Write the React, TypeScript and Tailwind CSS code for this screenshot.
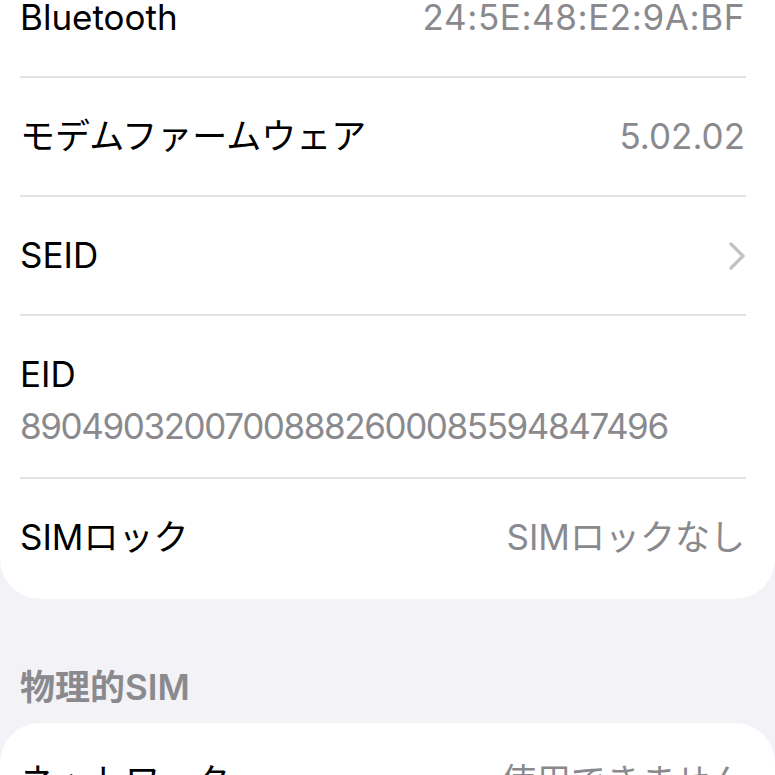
import React from "react";

const font = { fontFamily: '"Inter", "Noto Sans CJK JP", sans-serif' };

const Row = ({ label, value, chevron, wide }: { label: string; value?: string; chevron?: boolean; wide?: boolean }) => (
  <div className="flex h-[117px] items-center justify-between pr-[30px]">
    <span className="text-[35px] text-black">{label}</span>
    {value && (
      <span className={wide ? "text-[35px] tracking-[0.6px] text-[#8a8a8e]" : "text-[35px] text-[#8a8a8e]"}>{value}</span>
    )}
    {chevron && (
      <svg width="18" height="30" viewBox="0 0 18 30" className="mr-[-1px]">
        <path d="M3 3 L15 15 L3 27" fill="none" stroke="#c4c4c7" strokeWidth="3.5" strokeLinecap="round" strokeLinejoin="round" />
      </svg>
    )}
  </div>
);

const Sep = () => <div className="mr-[29px] h-[2px] bg-[#e3e3e6]" />;

export default function App() {
  return (
    <div className="h-[775px] overflow-hidden bg-[#f2f2f7]" style={font}>
      <div className="mt-[-41px] rounded-b-[40px] bg-white pl-[20px]">
        <Row label="Bluetooth" value="24:5E:48:E2:9A:BF" wide />
        <Sep />
        <Row label="モデムファームウェア" value="5.02.02" />
        <Sep />
        <Row label="SEID" chevron />
        <Sep />
        <div className="flex h-[161px] flex-col justify-center gap-[8px] pt-[6px]">
          <span className="text-[35px] leading-[44px] text-black">EID</span>
          <span className="text-[35px] leading-[44px] tracking-[-0.04em] text-[#8a8a8e]">89049032007008882600085594847496</span>
        </div>
        <Sep />
        <div className="pb-[3px]">
          <Row label="SIMロック" value="SIMロックなし" />
        </div>
      </div>
      <div className="px-[20px] pb-[16px] pt-[68px]">
        <div className="text-[35px] leading-[40px] font-semibold text-[#8a8a8e]">物理的SIM</div>
      </div>
      <div className="rounded-t-[40px] bg-white pl-[20px]">
        <Row label="ネットワーク" value="使用できません" />
      </div>
    </div>
  );
}
